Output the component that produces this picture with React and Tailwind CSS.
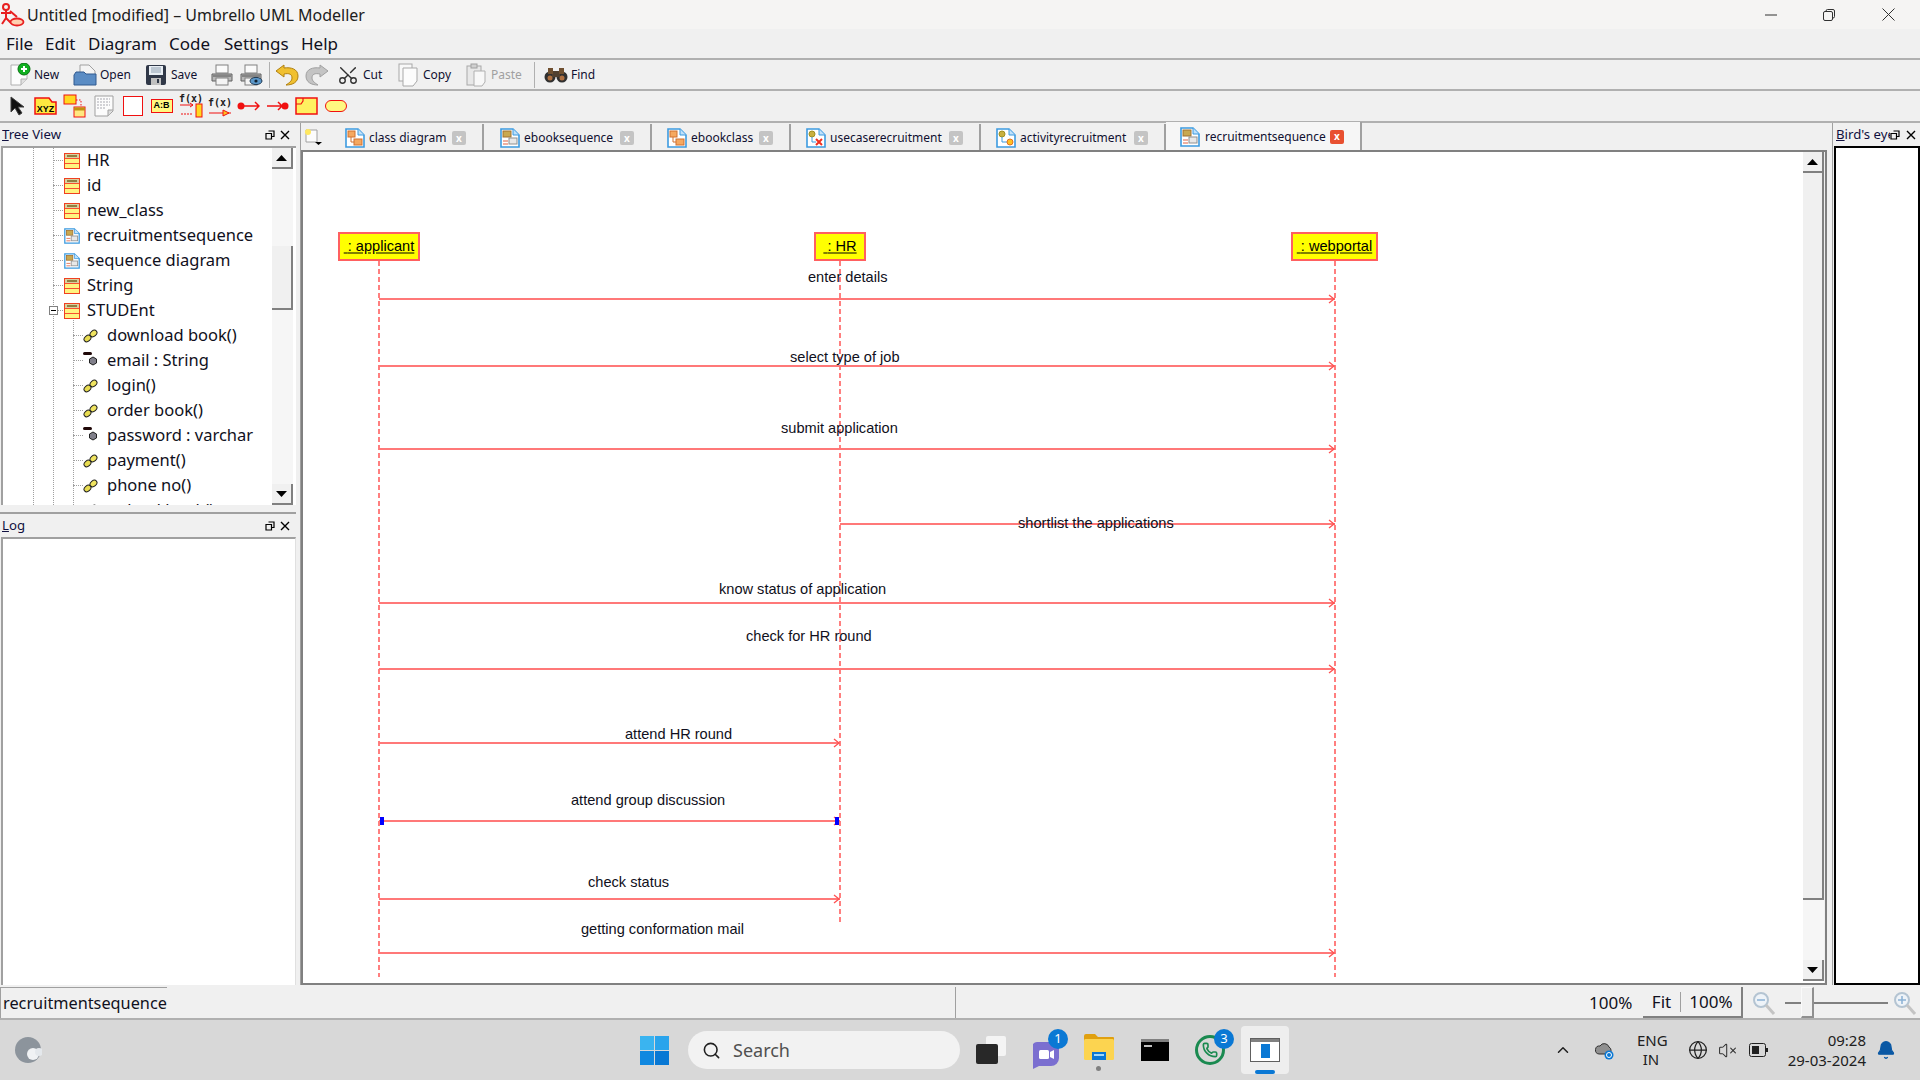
import React from 'react';
import { Search, ChevronUp, Bell, VolumeX, Globe, Phone, Scissors } from 'lucide-react';

const OX = 303;
const OY = 152;
const APPL = 379;
const HR = 840;
const WEB = 1335;

const MESSAGES = [
  { y: 299, from: APPL, to: WEB },
  { y: 366, from: APPL, to: WEB },
  { y: 449, from: APPL, to: WEB },
  { y: 524, from: HR, to: WEB },
  { y: 603, from: APPL, to: WEB },
  { y: 669, from: APPL, to: WEB },
  { y: 743, from: APPL, to: HR },
  { y: 821, from: APPL, to: HR },
  { y: 899, from: APPL, to: HR },
  { y: 953, from: APPL, to: WEB },
];

const LABELS = [
  { x: 808, y: 277, text: 'enter details' },
  { x: 790, y: 357, text: 'select type of job' },
  { x: 781, y: 428, text: 'submit application' },
  { x: 1018, y: 523, text: 'shortlist the applications' },
  { x: 719, y: 589, text: 'know status of application' },
  { x: 746, y: 636, text: 'check for HR round' },
  { x: 625, y: 734, text: 'attend HR round' },
  { x: 571, y: 800, text: 'attend group discussion' },
  { x: 588, y: 882, text: 'check status' },
  { x: 581, y: 929, text: 'getting conformation mail' },
];

const OBJECTS = [
  { x: 338, w: 82, text: ': applicant' },
  { x: 814, w: 52, text: ': HR' },
  { x: 1291, w: 87, text: ': webportal' },
];

const TREE = [
  { kind: 'class', text: 'HR' },
  { kind: 'class', text: 'id' },
  { kind: 'class', text: 'new_class' },
  { kind: 'seq', text: 'recruitmentsequence' },
  { kind: 'seq', text: 'sequence diagram' },
  { kind: 'class', text: 'String' },
  { kind: 'class', text: 'STUDEnt', open: true },
  { kind: 'op', text: 'download book()' },
  { kind: 'attr', text: 'email : String' },
  { kind: 'op', text: 'login()' },
  { kind: 'op', text: 'order book()' },
  { kind: 'attr', text: 'password : varchar' },
  { kind: 'op', text: 'payment()' },
  { kind: 'op', text: 'phone no()' },
  { kind: 'op', text: 'upload book()' },
];

const TABS = [
  { w: 'w-[154px]', text: 'class diagram', icon: 'class' },
  { w: 'w-[167px]', text: 'ebooksequence', icon: 'seq' },
  { w: 'w-[139px]', text: 'ebookclass', icon: 'class' },
  { w: 'w-[190px]', text: 'usecaserecruitment', icon: 'usecase' },
  { w: 'w-[185px]', text: 'activityrecruitment', icon: 'activity' },
];

const ClassIcon = () => (
  <svg width="16" height="16" viewBox="0 0 16 16" className="shrink-0">
    <rect x="0.5" y="0.5" width="15" height="15" fill="#fff480" stroke="#f04020" />
    <rect x="1" y="1" width="14" height="4" fill="#d8d0a0" />
    <rect x="3" y="2" width="10" height="2" fill="#908040" />
    <path d="M1 5.500h14M1 10.500h14" stroke="#f85030" />
  </svg>
);

const DiagramIcon = ({ kind }) => (
  <svg width="20" height="20" viewBox="0 0 20 20" className="shrink-0">
    <path d="M1 1h12l6 6v12H1z" fill="#fff" stroke="#3d9be0" strokeWidth="1.6" />
    <path d="M13 1v6h6" fill="#bfe0fa" stroke="#3d9be0" />
    {kind === 'seq' && (
      <>
        <rect x="3" y="3" width="8" height="6" fill="#c8a850" stroke="#a07030" />
        <rect x="9" y="10" width="8" height="6" fill="#e8e8e8" stroke="#909090" />
        <path d="M3 13h5M3 16h5" stroke="#e06040" />
      </>
    )}
    {kind === 'class' && (
      <>
        <rect x="3" y="3" width="7" height="6" fill="#f5a860" stroke="#d07030" />
        <rect x="9" y="11" width="8" height="6" fill="#f5a860" stroke="#d07030" />
        <path d="M6 9v5h3" stroke="#d07030" fill="none" />
      </>
    )}
    {kind === 'usecase' && (
      <>
        <circle cx="6" cy="6" r="3" fill="#c8b040" stroke="#a09020" />
        <path d="M6 9v5h4" stroke="#3d9be0" fill="none" />
        <path d="M10 11l6 6M16 11l-6 6" stroke="#f03020" strokeWidth="2" />
      </>
    )}
    {kind === 'activity' && (
      <>
        <circle cx="6" cy="6" r="3" fill="#c8b040" stroke="#a09020" />
        <path d="M6 9v5h5" stroke="#3d9be0" fill="none" />
        <circle cx="14" cy="14" r="3" fill="#ffc020" stroke="#e07020" />
      </>
    )}
  </svg>
);

const KeyIcon = () => (
  <svg width="15" height="14" viewBox="0 0 15 14">
    <ellipse cx="4.500" cy="9.500" rx="3.800" ry="2.800" transform="rotate(-40 4.500 9.500)" fill="#e8dc50" stroke="#202020" />
    <ellipse cx="10.500" cy="4.500" rx="3.800" ry="2.800" transform="rotate(-40 10.500 4.500)" fill="#f0e460" stroke="#202020" />
  </svg>
);

const AttrIcon = () => (
  <svg width="16" height="18" viewBox="0 0 16 18">
    <rect x="0" y="0" width="9" height="3" rx="1.5" fill="#200808" />
    <path d="M10 5l3.5 2v4L10 13l-3.5-2V7z" fill="#807f8a" stroke="#202020" />
  </svg>
);

const DockTitle = ({ first, rest, small }) => (
  <div className="flex h-[23px] shrink-0 items-center pl-[2px] text-[13.200px] text-[#101040]">
    <span className="flex-1 overflow-hidden whitespace-nowrap">
      <span className="underline">{first}</span>
      {rest}
    </span>
    <svg width="10" height="10" viewBox="0 0 10 10" className={small ? 'mr-[6px] shrink-0' : 'mr-[5px] shrink-0'}>
      <path d="M3.5 1h5.5v5.5H7M1 3.5h5.5V9H1z" fill="none" stroke="#000" strokeWidth="1.2" />
    </svg>
    <svg width="10" height="10" viewBox="0 0 10 10" className={small ? 'mr-[4px] shrink-0' : 'mr-[6px] shrink-0'}>
      <path d="M1 1l8 8M9 1L1 9" stroke="#000" strokeWidth="1.4" />
    </svg>
  </div>
);

const ScrollBtn = ({ dir }) => (
  <div className="flex h-[21px] w-[21px] shrink-0 items-center justify-center border-r-2 border-b-2 border-[#808080] bg-[#f0f0f0]">
    <svg width="11" height="6" viewBox="0 0 11 6">
      <path d={dir === 'up' ? 'M0 6h11L5.5 0z' : 'M0 0h11L5.5 6z'} fill="#000" />
    </svg>
  </div>
);

const Tool = ({ w, label, disabled, children }) => (
  <div className={`flex items-center shrink-0 ${w}`}>
    <div className="flex h-[24px] w-[24px] shrink-0 items-center justify-center">{children}</div>
    {label && <span className={`ml-[3px] text-[12px] ${disabled ? 'text-[#a0a0a0]' : 'text-[#101030]'}`}>{label}</span>}
  </div>
);

const Doc = ({ children }) => (
  <svg width="24" height="24" viewBox="0 0 24 24">
    <path d="M4 2h16v14l-6 6H4z" fill="#fcfcfc" stroke="#b0b0b0" />
    <path d="M20 16h-6v6" fill="#e0e0e0" stroke="#b0b0b0" />
    {children}
  </svg>
);

const Printer = ({ eye }) => (
  <svg width="24" height="24" viewBox="0 0 24 24">
    <rect x="6" y="2" width="12" height="8" fill="#fafafa" stroke="#808080" />
    <path d="M2 11h20v7H2z" fill="#b8b8b8" stroke="#606060" />
    <rect x="6" y="15" width="12" height="7" fill="#f4f4f4" stroke="#808080" />
    <path d="M3 13h18" stroke="#505050" />
    {eye && <ellipse cx="17" cy="18" rx="6" ry="3.6" fill="#5a96c8" stroke="#203850" />}
    {eye && <circle cx="17" cy="18" r="1.6" fill="#102030" />}
  </svg>
);

const UndoArrow = ({ fill, stroke, flip }) => (
  <svg width="24" height="22" viewBox="0 0 24 22" className={flip ? '-scale-x-100' : ''}>
    <path d="M9 1L1 7l8 6v-3c5-1 8 0 8 4 0 3-3 5-6 7 7 0 12-3 12-9 0-7-7-9-14-8z" fill={fill} stroke={stroke} />
  </svg>
);

const Palette = ({ children }) => (
  <div className="flex h-[24px] w-[29px] shrink-0 items-center justify-center">{children}</div>
);

const FxText = ({ y }) => (
  <text x="12" y={y} textAnchor="middle" fontSize="10" fontFamily="'DejaVu Sans Mono', monospace" fontWeight="600" fill="#202020">
    f(x)
  </text>
);

const ZoomGlass = ({ plus }) => (
  <svg width="24" height="26" viewBox="0 0 24 26">
    <circle cx="9" cy="10" r="7" fill="#eef3f8" stroke="#b4c4d2" strokeWidth="2" />
    <path d="M14 15l8 9" stroke="#c4c4c4" strokeWidth="3" />
    <path d="M5 10h8" stroke="#8ab0d4" strokeWidth="1.5" />
    {plus && <path d="M9 6v8" stroke="#8ab0d4" strokeWidth="1.5" />}
  </svg>
);

const Badge = ({ n }) => (
  <div className="absolute -top-[3px] -right-[3px] flex h-[20px] w-[20px] items-center justify-center rounded-full bg-[#0a78d4] text-[13px] text-white">
    {n}
  </div>
);

const App = () => {
  return (
    <div className="flex h-screen w-[1920px] flex-col overflow-hidden bg-[#f0f0f0] font-['Noto_Sans',sans-serif] text-black">
      {/* title bar */}
      <div className="flex h-[29px] shrink-0 items-center bg-[#f5f4f3]">
        <svg width="24" height="24" viewBox="0 0 24 24" className="ml-[1px]">
          <circle cx="5" cy="4" r="3" fill="none" stroke="#e82020" strokeWidth="2" />
          <path d="M5 7v8M0 10h10M5 15l-4 6M5 15l5 5M9 8l7 6" fill="none" stroke="#e82020" strokeWidth="2" />
          <ellipse cx="16" cy="19" rx="6.500" ry="3.500" fill="#ffd0b0" stroke="#e82020" strokeWidth="1.800" />
        </svg>
        <span className="ml-[2px] text-[16px] text-[#202020] whitespace-nowrap">Untitled [modified] – Umbrello UML Modeller</span>
        <div className="ml-auto flex items-center">
          <svg width="12" height="12" viewBox="0 0 12 12"><path d="M0 6h12" stroke="#303030" /></svg>
          <svg width="12" height="12" viewBox="0 0 12 12" className="ml-[46px]">
            <rect x="0.5" y="2.5" width="9" height="9" rx="1.5" fill="none" stroke="#303030" />
            <path d="M3 2.5V2a1.500 1.500 0 0 1 1.500-1.500H10a1.500 1.500 0 0 1 1.500 1.500v5.500A1.500 1.500 0 0 1 10 9" fill="none" stroke="#303030" />
          </svg>
          <svg width="13" height="13" viewBox="0 0 13 13" className="ml-[47px] mr-[25px]"><path d="M0.500 0.500l12 12M12.500 0.500l-12 12" stroke="#303030" /></svg>
        </div>
      </div>

      {/* menu */}
      <div className="flex h-[31px] shrink-0 items-center border-b-2 border-[#b0b0b0] pl-[6px] text-[17px] text-[#101020]">
        <span className="w-[39px]">File</span>
        <span className="w-[43px]">Edit</span>
        <span className="w-[81px]">Diagram</span>
        <span className="w-[55px]">Code</span>
        <span className="w-[77px]">Settings</span>
        <span>Help</span>
      </div>

      {/* main toolbar */}
      <div className="flex h-[31px] shrink-0 items-center border-b-2 border-[#b0b0b0] pl-[7px]">
        <Tool w="w-[66px]" label="New">
          <Doc><circle cx="17" cy="6" r="6" fill="#10b020" stroke="#087010" /><path d="M17 3v6M14 6h6" stroke="#fff" strokeWidth="2" /></Doc>
        </Tool>
        <Tool w="w-[71px]" label="Open">
          <svg width="24" height="24" viewBox="0 0 24 24">
            <path d="M7 2h9l6 6v6H7z" fill="#f4f4f4" stroke="#a0a0a0" />
            <path d="M1 12l2-3h8l2 2h10v11H1z" fill="#5a8cc4" stroke="#305a90" />
          </svg>
        </Tool>
        <Tool w="w-[66px]" label="Save">
          <svg width="22" height="22" viewBox="0 0 22 22">
            <rect x="1" y="1" width="20" height="20" rx="2" fill="#303848" />
            <rect x="4" y="2" width="14" height="9" fill="#e8eef4" />
            <path d="M6 4h10M6 6h10M6 8h10" stroke="#90a0b0" />
            <rect x="6" y="14" width="10" height="7" fill="#c0c0c0" />
            <rect x="12" y="15" width="2" height="4" fill="#303848" />
          </svg>
        </Tool>
        <Tool w="w-[29px]"><Printer /></Tool>
        <Tool w="w-[30px]"><Printer eye /></Tool>
        <div className="h-[26px] w-px shrink-0 bg-[#b0b0b0]" />
        <div className="w-[5px] shrink-0" />
        <Tool w="w-[30px]"><UndoArrow fill="#f0c030" stroke="#b08010" /></Tool>
        <Tool w="w-[31px]"><UndoArrow fill="#c4c4c4" stroke="#a0a0a0" flip /></Tool>
        <Tool w="w-[60px]" label="Cut">
          <Scissors size={22} strokeWidth={1.5} className="text-[#303030] -rotate-90" />
        </Tool>
        <Tool w="w-[68px]" label="Copy">
          <svg width="24" height="24" viewBox="0 0 24 24">
            <rect x="3" y="1" width="13" height="17" fill="#f8f8f8" stroke="#a8a8a8" />
            <path d="M7 5h14v13l-4 5H7z" fill="#fcfcfc" stroke="#a8a8a8" />
          </svg>
        </Tool>
        <Tool w="w-[70px]" label="Paste" disabled>
          <svg width="24" height="24" viewBox="0 0 24 24">
            <rect x="3" y="3" width="14" height="19" fill="#e8e8e8" stroke="#a8a8a8" />
            <rect x="7" y="1" width="6" height="4" fill="#d0d0d0" stroke="#a0a0a0" />
            <path d="M10 8h11v11l-3 4h-8z" fill="#f8f8f8" stroke="#b0b0b0" />
          </svg>
        </Tool>
        <div className="h-[26px] w-px shrink-0 bg-[#b0b0b0]" />
        <div className="w-[9px] shrink-0" />
        <Tool w="w-[60px]" label="Find">
          <svg width="24" height="18" viewBox="0 0 24 18">
            <circle cx="6" cy="11" r="5.500" fill="#303030" />
            <circle cx="18" cy="11" r="5.500" fill="#303030" />
            <rect x="8" y="5" width="8" height="6" fill="#504030" />
            <rect x="4" y="2" width="5" height="6" fill="#705030" />
            <rect x="15" y="2" width="5" height="6" fill="#705030" />
            <circle cx="6" cy="12" r="2.500" fill="#b07040" />
            <circle cx="18" cy="12" r="2.500" fill="#b07040" />
          </svg>
        </Tool>
      </div>

      {/* diagram toolbar */}
      <div className="flex h-[32px] shrink-0 items-center border-b-2 border-[#b0b0b0] pl-[2px]">
        <Palette>
          <svg width="16" height="20" viewBox="0 0 16 20"><path d="M2 1v15l4-4 4 7 3-2-4-6h6z" fill="#101010" stroke="#404040" /></svg>
        </Palette>
        <Palette>
          <svg width="23" height="18" viewBox="0 0 23 18">
            <path d="M1 1h14l3 4h4v12H1z" fill="#ffe840" stroke="#f01010" strokeWidth="1.500" />
            <text x="11.500" y="14.500" textAnchor="middle" fontSize="9" fontWeight="700" fontFamily="'Liberation Sans', sans-serif" fill="#000">XYZ</text>
          </svg>
        </Palette>
        <Palette>
          <svg width="23" height="24" viewBox="0 0 23 24">
            <rect x="1" y="1" width="12" height="9" fill="#ffd820" stroke="#f01010" />
            <rect x="11" y="13" width="11" height="10" fill="#ffe880" stroke="#f01010" />
            <path d="M11 15h11" stroke="#c09010" strokeWidth="3" />
            <path d="M13 6h5v7" fill="none" stroke="#f01010" strokeDasharray="1.500 1.500" />
          </svg>
        </Palette>
        <Palette>
          <svg width="20" height="22" viewBox="0 0 20 22">
            <path d="M1 1h18v15l-5 5H1z" fill="#fcfcfc" stroke="#a0a0a0" />
            <path d="M19 15h-5v6" fill="#dcdcdc" stroke="#a0a0a0" />
            <path d="M3 4h13M3 7h13M3 10h13M3 13h9" stroke="#a8a8b0" strokeDasharray="2 1" />
          </svg>
        </Palette>
        <Palette>
          <div className="h-[20px] w-[20px] border-[1.5px] border-[#f01010] bg-white" />
        </Palette>
        <Palette>
          <div className="flex h-[14px] w-[22px] items-center justify-center border-[1.5px] border-[#f01010] bg-[#fff880] font-['Liberation_Sans',sans-serif] text-[9px] font-bold">A:B</div>
        </Palette>
        <Palette>
          <svg width="24" height="24" viewBox="0 0 24 24">
            <FxText y="8" />
            <path d="M1 11h13M11 9l3 2-3 2" stroke="#f01010" fill="none" />
            <path d="M2 20h12" stroke="#f01010" strokeDasharray="2 1" />
            <rect x="17" y="10" width="6" height="13" fill="#ffd820" stroke="#f01010" />
          </svg>
        </Palette>
        <Palette>
          <svg width="24" height="24" viewBox="0 0 24 24">
            <FxText y="12" />
            <path d="M1 19h22" stroke="#f01010" />
            <path d="M15 16l6 3-6 3z" fill="#ffc020" stroke="#f01010" />
          </svg>
        </Palette>
        <Palette>
          <svg width="23" height="12" viewBox="0 0 23 12">
            <circle cx="4" cy="6" r="3.500" fill="#f01010" />
            <path d="M4 6h18M18 2l4 4-4 4" stroke="#f01010" strokeWidth="1.500" fill="none" />
          </svg>
        </Palette>
        <Palette>
          <svg width="23" height="12" viewBox="0 0 23 12">
            <circle cx="19" cy="6" r="3.500" fill="#f01010" />
            <path d="M1 6h16M12 2l4 4-4 4" stroke="#f01010" strokeWidth="1.500" fill="none" />
          </svg>
        </Palette>
        <Palette>
          <svg width="23" height="18" viewBox="0 0 23 18">
            <rect x="1" y="1" width="21" height="16" fill="#fff060" stroke="#f01010" strokeWidth="1.500" />
            <path d="M1 7h5l2-3V1" fill="none" stroke="#f01010" strokeWidth="1.200" />
          </svg>
        </Palette>
        <Palette>
          <div className="h-[12px] w-[22px] rounded-full border-[1.5px] border-[#f01010] bg-[#fff880]" />
        </Palette>
      </div>

      {/* docks and diagram */}
      <div className="flex h-[862px] shrink-0">
        {/* left docks */}
        <div className="flex w-[296px] shrink-0 flex-col">
          <DockTitle first="T" rest="ree View" />
          <div className="ml-px flex h-[359px] shrink-0 border-t-2 border-l-2 border-[#a0a0a0] bg-white">
            <div className="relative flex-1 overflow-hidden">
              {/* tree guides */}
              <div className="absolute left-[30px] top-0 h-full border-l border-dotted border-[#a0a0a0]" />
              <div className="absolute left-[50px] top-0 h-full border-l border-dotted border-[#a0a0a0]" />
              <div className="absolute left-[70px] top-[170px] h-full border-l border-dotted border-[#a0a0a0]" />
              <div className="flex flex-col">
                {TREE.map((item) => {
                  const child = item.kind === 'op' || item.kind === 'attr';
                  return (
                    <div key={item.text} className="relative flex h-[25px] items-center whitespace-nowrap text-[16.500px] text-[#101020]">
                      {item.open && (
                        <div className="absolute left-[46px] top-[8px] flex h-[9px] w-[9px] items-center justify-center border border-[#808080] bg-white">
                          <div className="h-px w-[5px] bg-black" />
                        </div>
                      )}
                      <div className={child ? 'ml-[70px] w-[10px] border-t border-dotted border-[#a0a0a0]' : 'ml-[50px] w-[10px] border-t border-dotted border-[#a0a0a0]'} />
                      <div className={child ? 'flex w-[24px] shrink-0 items-center' : 'flex w-[24px] shrink-0 items-center pl-[1px]'}>
                        {item.kind === 'class' && <ClassIcon />}
                        {item.kind === 'seq' && <div className="origin-left scale-[0.8]"><DiagramIcon kind="seq" /></div>}
                        {item.kind === 'op' && <KeyIcon />}
                        {item.kind === 'attr' && <AttrIcon />}
                      </div>
                      <span>{item.text}</span>
                    </div>
                  );
                })}
              </div>
            </div>
            <div className="mr-[3px] flex w-[21px] shrink-0 flex-col bg-[#f6f6f6]">
              <ScrollBtn dir="up" />
              <div className="mt-[77px] h-[64px] w-[21px] border-r-2 border-b-2 border-[#808080] bg-[#f0f0f0]" />
              <div className="flex-1" />
              <ScrollBtn dir="down" />
            </div>
          </div>
          <div className="mt-[7px] h-[2px] shrink-0 bg-[#a0a0a0]" />
          <DockTitle first="L" rest="og" />
          <div className="ml-px flex-1 border-t-2 border-r border-l-2 border-[#a0a0a0] border-r-[#e0e0e0] bg-white" />
        </div>

        <div className="ml-[4px] w-px shrink-0 bg-[#a0a0a0]" />

        {/* diagram area */}
        <div className="flex w-[1526px] shrink-0 flex-col">
          <div className="flex h-[29px] shrink-0 items-end border-b-2 border-[#808080] pl-[4px]">
            <div className="flex h-[27px] w-[25px] shrink-0 items-center">
              <svg width="18" height="18" viewBox="0 0 18 18">
                <path d="M1 2h11v12H1z" fill="#fcfcfc" stroke="#a0a0a0" />
                <circle cx="3" cy="4" r="3" fill="#ffe860" />
                <path d="M10 14h7l-3.500 3z" fill="#000" />
              </svg>
            </div>
            {TABS.map((tab, i) => (
              <div key={tab.text} className={`flex h-[26px] shrink-0 items-center border-r-2 border-[#a0a0a0] pt-[2px] pl-[15px] ${tab.w} ${i === 0 ? 'ml-[1px] -translate-x-[1px]' : ''}`}>
                <DiagramIcon kind={tab.icon} />
                <span className="ml-[4px] whitespace-nowrap text-[12px] text-[#101030]">{tab.text}</span>
                <div className="mr-[16px] ml-auto flex h-[14px] w-[14px] shrink-0 items-center justify-center rounded-[2px] bg-[#c4c4c4] text-[10px] font-bold text-white">x</div>
              </div>
            ))}
            <div className="flex h-[28px] w-[196px] shrink-0 items-center border-r-2 border-[#a0a0a0] bg-[#f6f6f6] pt-[1px] pl-[14px]">
              <DiagramIcon kind="seq" />
              <span className="ml-[5px] whitespace-nowrap text-[12px] text-[#101030]">recruitmentsequence</span>
              <div className="mr-[16px] ml-auto flex h-[14px] w-[14px] shrink-0 items-center justify-center rounded-[2px] bg-[#e85030] text-[10px] font-bold text-white">x</div>
            </div>
          </div>

          <div className="flex flex-1 border-r-2 border-b-2 border-l-2 border-[#808080] bg-white">
            <div className="relative flex-1 overflow-hidden">
              <svg width="1497" height="830" className="absolute left-0 top-0">
                {[APPL, HR, WEB].map((x) => (
                  <line
                    key={x}
                    x1={x - OX}
                    y1={261 - OY}
                    x2={x - OX}
                    y2={(x === HR ? 923 : 977) - OY}
                    stroke="#ff7f7f"
                    strokeWidth="2"
                    strokeDasharray="5 3"
                  />
                ))}
                {MESSAGES.map((m) => (
                  <g key={m.y}>
                    <line x1={m.from - OX} y1={m.y - OY} x2={m.to - OX} y2={m.y - OY} stroke="#ff7878" strokeWidth="1.800" />
                    <path
                      d={`M${m.to - OX - 6} ${m.y - OY - 4}l5 4-5 4`}
                      fill="none"
                      stroke="#ff5050"
                      strokeWidth="1.300"
                    />
                  </g>
                ))}
                <rect x={380 - OX} y={817 - OY} width="4" height="8" fill="#0000ff" />
                <rect x={835 - OX} y={817 - OY} width="4" height="8" fill="#0000ff" />
              </svg>
              {OBJECTS.map((o) => (
                <div
                  key={o.text}
                  className="absolute flex h-[29px] items-center justify-center border-2 border-[#ff6060] bg-[#ffff00] font-['Liberation_Sans',sans-serif] text-[14.600px] text-black"
                  style={{ left: o.x - OX, top: 232 - OY, width: o.w }}
                >
                  <span className="whitespace-pre underline decoration-[#808000] decoration-2"> {o.text}</span>
                </div>
              ))}
              {LABELS.map((l) => (
                <div
                  key={l.text}
                  className="absolute -translate-y-1/2 whitespace-nowrap font-['Liberation_Sans',sans-serif] text-[14.600px] leading-[18px] text-[#101020]"
                  style={{ left: l.x - OX, top: l.y - OY }}
                >
                  {l.text}
                </div>
              ))}
            </div>
            <div className="mb-[2px] flex w-[21px] shrink-0 flex-col bg-[#f6f6f6]">
              <ScrollBtn dir="up" />
              <div className="h-[727px] w-[21px] shrink-0 border-r-2 border-b-2 border-[#808080] bg-[#f0f0f0]" />
              <div className="flex-1" />
              <ScrollBtn dir="down" />
            </div>
            <div className="w-px shrink-0 bg-[#f0f0f0]" />
          </div>
        </div>

        <div className="w-[5px] shrink-0" />
        <div className="w-px shrink-0 bg-[#a0a0a0]" />
        <div className="w-px shrink-0" />

        {/* bird's eye */}
        <div className="flex flex-1 flex-col overflow-hidden">
          <DockTitle first="B" rest="ird's eye" small />
          <div className="flex-1 border-2 border-black bg-white" />
        </div>
      </div>

      {/* status bar */}
      <div className="flex h-[35px] shrink-0 items-stretch border-b-2 border-[#b0b0b0] pt-[2px]">
        <div className="flex w-[167px] items-center border-t border-l border-[#a0a0a0] pl-[2px] text-[16.300px] whitespace-nowrap text-[#101020]">
          recruitmentsequence
        </div>
        <div className="ml-[788px] w-px bg-[#a0a0a0]" />
        <span className="ml-[633px] flex w-[54px] items-center text-[17px] text-[#101020]">100%</span>
        <div className="flex w-[100px] items-center border-r-2 border-b-2 border-[#808080] text-[17px] text-[#101020]">
          <span className="w-[37px] text-center">Fit</span>
          <div className="h-[20px] w-px bg-[#a0a0a0]" />
          <span className="flex-1 text-center">100%</span>
        </div>
        <div className="ml-[6px] flex w-[30px] items-center justify-center"><ZoomGlass /></div>
        <div className="relative ml-[6px] flex w-[103px] items-center">
          <div className="h-[2px] w-full bg-[#808080]" />
          <div className="absolute top-0 left-[16px] h-[31px] w-[13px] border-t border-r-2 border-b-2 border-l border-[#909090] border-t-[#fafafa] border-l-[#fafafa] bg-[#f0f0f0]" />
        </div>
        <div className="ml-[4px] flex w-[26px] items-center justify-center"><ZoomGlass plus /></div>
      </div>

      {/* taskbar */}
      <div className="flex h-[60px] shrink-0 items-center bg-[#d8d8d8]">
        <div className="ml-[15px] h-[26px] w-[27px] shrink-0">
          <svg width="27" height="26" viewBox="0 0 27 26">
            <circle cx="13" cy="13" r="13" fill="#8c949c" />
            <circle cx="18" cy="17" r="6" fill="#f0f2f4" />
            <circle cx="24" cy="15" r="4" fill="#e4e8ec" />
          </svg>
        </div>
        <div className="ml-[598px] grid h-[29px] w-[29px] shrink-0 grid-cols-2 gap-[1px]">
          <div className="bg-[#3ab4f0]" />
          <div className="bg-[#2aa4ec]" />
          <div className="bg-[#1088e0]" />
          <div className="bg-[#0878d4]" />
        </div>
        <div className="ml-[19px] flex h-[38px] w-[272px] shrink-0 items-center rounded-full bg-[#f2f2f2] pl-[14px] text-[18px] text-[#505050]">
          <Search size={19} strokeWidth={2} className="text-[#202020]" />
          <span className="ml-[12px]">Search</span>
        </div>
        <div className="relative ml-[16px] h-[28px] w-[30px] shrink-0">
          <div className="absolute top-0 right-0 h-[20px] w-[20px] rounded-[2px] bg-[#f4f4f4]" />
          <div className="absolute bottom-0 left-0 h-[20px] w-[22px] rounded-[2px] bg-[#282828]" />
        </div>
        <div className="relative ml-[25px] h-[36px] w-[34px] shrink-0">
          <svg width="30" height="36" viewBox="0 0 30 36" className="mt-[2px]">
            <path d="M6 8h16a6 6 0 0 1 6 6v10a8 8 0 0 1-8 8H8l-6 3v-25a6 6 0 0 1 4-2z" fill="#7b6fd0" />
            <rect x="8" y="16" width="10" height="9" rx="1.500" fill="#fff" />
            <path d="M19 18l4-2v9l-4-2z" fill="#fff" />
          </svg>
          <Badge n="1" />
        </div>
        <div className="relative ml-[18px] flex h-[42px] w-[32px] shrink-0 flex-col">
          <svg width="32" height="28" viewBox="0 0 32 28" className="mt-[4px]">
            <path d="M1 3a2 2 0 0 1 2-2h9l3 3h15a1 1 0 0 1 1 1v5H1z" fill="#e0a010" />
            <rect x="1" y="6" width="30" height="21" rx="1.500" fill="#fcd450" />
            <rect x="9" y="19" width="14" height="8" fill="#0a78d4" />
            <rect x="11" y="21" width="10" height="2" fill="#a0d8f8" />
          </svg>
          <div className="absolute bottom-0 left-[13px] h-[5px] w-[5px] rounded-full bg-[#808080]" />
        </div>
        <div className="ml-[26px] flex h-[22px] w-[28px] shrink-0 flex-col bg-black">
          <div className="h-[3px] w-full bg-[#808080]" />
          <div className="mt-[3px] ml-[3px] h-[2px] w-[8px] bg-[#c0c0c0]" />
        </div>
        <div className="relative ml-[26px] h-[36px] w-[36px] shrink-0">
          <div className="mt-[3px] flex h-[30px] w-[30px] items-center justify-center rounded-full border-[3px] border-[#1a8a50]">
            <Phone size={16} strokeWidth={2.500} className="text-[#1a8a50]" />
          </div>
          <Badge n="3" />
        </div>
        <div className="relative ml-[10px] flex h-[48px] w-[48px] shrink-0 items-center justify-center rounded-[4px] bg-[#eeeeee]">
          <div className="flex h-[24px] w-[30px] flex-col border border-[#606060] bg-white">
            <div className="h-[3px] bg-[#808080]" />
            <div className="mx-auto mt-[2px] h-[14px] w-[9px] bg-[#0a78d4]" />
          </div>
          <div className="absolute bottom-0 left-[14px] h-[4px] w-[20px] rounded-full bg-[#0a78d4]" />
        </div>
        <ChevronUp size={18} strokeWidth={2} className="ml-[265px] shrink-0 text-[#202020]" />
        <svg width="20" height="20" viewBox="0 0 20 20" className="ml-[23px] shrink-0">
          <path d="M4 14a4 4 0 0 1 1-8 5 5 0 0 1 9 1 4 4 0 0 1 0 7z" fill="#909090" stroke="#303030" />
          <circle cx="14" cy="15" r="4.500" fill="#0a78d4" />
          <circle cx="14" cy="15" r="2.500" fill="none" stroke="#fff" />
        </svg>
        <div className="ml-[22px] w-[28px] shrink-0 text-center text-[15px] leading-[19px] text-[#202020]">
          <div>ENG</div>
          <div>IN</div>
        </div>
        <Globe size={20} strokeWidth={1.500} className="ml-[23px] shrink-0 text-[#202020]" />
        <VolumeX size={19} strokeWidth={1.300} className="ml-[10px] shrink-0 text-[#303030]" />
        <svg width="20" height="14" viewBox="0 0 20 14" className="ml-[12px] shrink-0">
          <rect x="0.500" y="0.500" width="16" height="13" rx="2" fill="none" stroke="#202020" />
          <rect x="3" y="3" width="7" height="8" fill="#202020" />
          <rect x="17" y="5" width="2" height="4" fill="#202020" />
        </svg>
        <div className="ml-[14px] w-[83px] shrink-0 text-right text-[15px] leading-[20px] text-[#202020]">
          <div>09:28</div>
          <div>29-03-2024</div>
        </div>
        <Bell size={20} fill="#0a58a4" strokeWidth={1.500} className="ml-[10px] shrink-0 text-[#0a58a4]" />
      </div>
    </div>
  );
};

export default App;
